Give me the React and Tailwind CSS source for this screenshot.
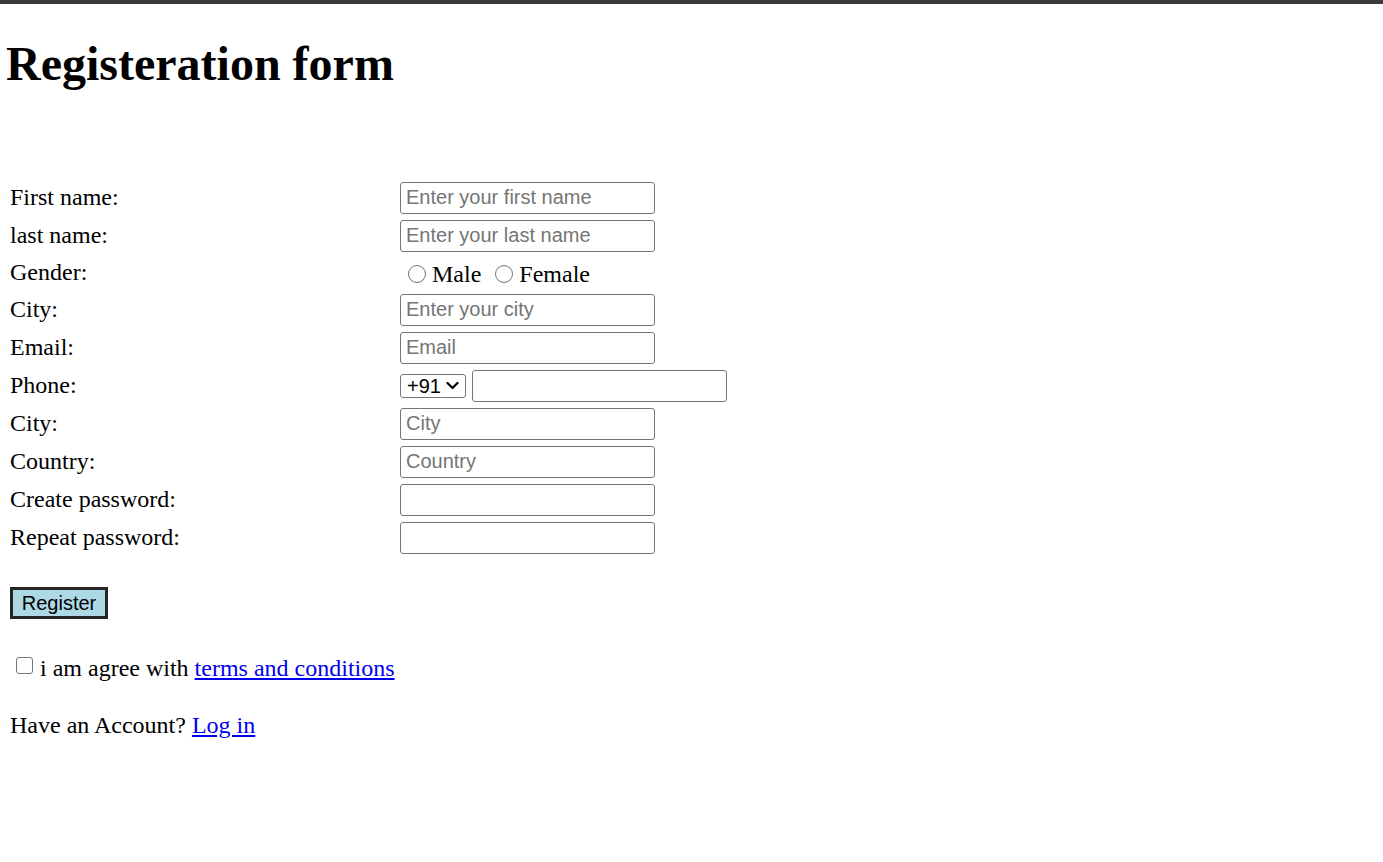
const serif = { fontFamily: '"Liberation Serif", "Times New Roman", serif' };

const Field = ({ placeholder, w = 'w-[255px]' }) => (
  <input
    type="text"
    placeholder={placeholder}
    className={`${w} h-[32px] border border-[#767676] rounded-[3px] bg-white pl-[5px] text-[20px] text-black placeholder:text-[#757575] font-['Liberation_Sans',Arial,sans-serif] outline-none`}
  />
);

const Row = ({ label, children, h = 'h-[35px]' }) => (
  <div className={`flex items-center ${h}`}>
    <div className="w-[390px] text-[24px] leading-[28px] pb-[2px]">{label}</div>
    <div className="flex items-center">{children}</div>
  </div>
);

const Radio = ({ text }) => (
  <span className="flex items-center">
    <span className="w-[18px] h-[18px] rounded-full border border-[#767676] bg-white"></span>
    <span className="ml-[6px] text-[24px] leading-[28px]">{text}</span>
  </span>
);

export default function App() {
  return (
    <div className="min-h-[862px] bg-white text-black" style={serif}>
      <div className="h-[4px] bg-[#3c3c3c]"></div>
      <div className="pl-[6px]">
        <h1 className="mt-[32px] text-[48px] leading-[55px] font-bold">Registeration form</h1>
      </div>

      <div className="pl-[10px] mt-[89px] flex flex-col gap-[3px]">
        <Row label="First name:"><Field placeholder="Enter your first name" /></Row>
        <Row label="last name:"><Field placeholder="Enter your last name" /></Row>
        <Row label="Gender:" h="h-[33px]">
          <div className="flex items-center pl-[8px] pt-[2px]">
            <Radio text="Male" />
            <span className="ml-[14px]"><Radio text="Female" /></span>
          </div>
        </Row>
        <Row label="City:"><Field placeholder="Enter your city" /></Row>
        <Row label="Email:"><Field placeholder="Email" /></Row>
        <Row label="Phone:">
          <div className="w-[66px] h-[24px] border border-[#767676] rounded-[3px] bg-white flex items-center pl-[6px] gap-[5px] text-[20px] font-['Liberation_Sans',Arial,sans-serif]">
            <span>+91</span>
            <svg width="13" height="9" viewBox="0 0 13 9" fill="none" stroke="#000" strokeWidth="2.2" strokeLinecap="round" strokeLinejoin="round">
              <path d="M1.5 2 L6.5 7 L11.5 2" />
            </svg>
          </div>
          <span className="w-[6px]"></span>
          <Field placeholder="" />
        </Row>
        <Row label="City:"><Field placeholder="City" /></Row>
        <Row label="Country:"><Field placeholder="Country" /></Row>
        <Row label="Create password:"><Field placeholder="" /></Row>
        <Row label="Repeat password:"><Field placeholder="" /></Row>
      </div>

      <div className="pl-[10px] mt-[32px]">
        <button className="w-[98px] h-[32px] border-[3px] border-[#262626] bg-[#add8e6] text-[20px] leading-none text-black font-['Liberation_Sans',Arial,sans-serif]">
          Register
        </button>
      </div>

      <div className="pl-[16px] mt-[35px] flex items-start text-[24px] leading-[28px]">
        <span className="mt-[3px] w-[17px] h-[17px] rounded-[3px] border border-[#767676] bg-white"></span>
        <span className="ml-[7px]">
          i am agree with <a href="#" className="text-[#0000ee] underline">terms and conditions</a>
        </span>
      </div>

      <div className="pl-[10px] mt-[29px] text-[24px] leading-[28px]">
        Have an Account? <a href="#" className="text-[#0000ee] underline">Log in</a>
      </div>
    </div>
  );
}
